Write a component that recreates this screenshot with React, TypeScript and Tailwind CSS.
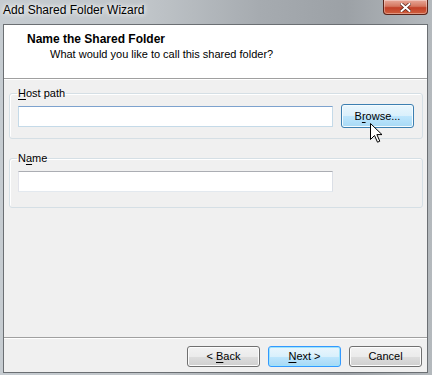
import React from 'react';

// Small helper for Windows-style access key underline
const Key: React.FC<{ children: React.ReactNode }> = ({ children }) => (
  <span className="underline underline-offset-[2px] decoration-1">{children}</span>
);

const WinButton: React.FC<{
  children: React.ReactNode;
  variant?: 'normal' | 'default' | 'hover';
  className?: string;
}> = ({ children, variant = 'normal', className = '' }) => {
  const styles = {
    normal:
      'border-[#707070] bg-[linear-gradient(#f2f2f2_0%,#ebebeb_50%,#dddddd_51%,#cfcfcf_100%)] shadow-[inset_0_0_0_1px_#fcfcfc]',
    default:
      'border-[#3399ff] bg-[linear-gradient(#eaf6fd_0%,#d9f0fc_50%,#bee6fd_51%,#a7d9f5_100%)] shadow-[inset_0_0_0_1px_#9fe3fa]',
    hover:
      'border-[#3c7fb1] bg-[linear-gradient(#eaf6fd_0%,#d9f0fc_50%,#bee6fd_51%,#a7d9f5_100%)] shadow-[inset_0_0_0_1px_#f4fbfe]',
  };
  return (
    <button
      type="button"
      className={`flex items-center justify-center w-[73px] rounded-[3px] border text-[11px] text-black ${styles[variant]} ${className}`}
    >
      <span className="whitespace-pre">{children}</span>
    </button>
  );
};

const TextBox: React.FC<{ focused?: boolean }> = ({ focused }) => (
  <div
    className={`w-[315px] h-[21px] bg-white border ${
      focused
        ? 'border-[#c5dae8] border-t-[#7da2ce]'
        : 'border-[#e3e9ef] border-t-[#abadb3] border-l-[#e2e3ea] border-r-[#dbdfe6]'
    }`}
  />
);

const Cursor: React.FC = () => (
  <svg
    className="absolute left-[370px] top-[123px]"
    width="13"
    height="20"
    viewBox="0 0 13 20"
  >
    <path
      d="M0.5 0.5 L0.5 16.5 L4.5 12.5 L7.5 19.2 L9.8 18.2 L6.9 11.6 L12 11.6 Z"
      fill="#fff"
      stroke="#000"
      strokeWidth="1"
      strokeLinejoin="miter"
    />
  </svg>
);

export default function App() {
  return (
    <div
      className="relative w-[432px] h-[375px] flex flex-col overflow-hidden bg-[linear-gradient(90deg,#c6ccd1_0%,#bfc4c8_35%,#a6abb0_60%,#9ca1a6_80%,#b4b9bd_100%)] font-['Liberation_Sans',Arial,sans-serif] text-black"
    >
      {/* Title bar */}
      <div className="h-[24px] flex items-start shrink-0">
        <div className="pl-[3px] pt-[2px] text-[12px] leading-[16px] text-black [text-shadow:0_0_6px_#ffffff,0_0_4px_#ffffff]">
          Add Shared Folder Wizard
        </div>
        <div className="ml-auto mr-[4px] w-[45px] h-[15px] rounded-b-[4px] border border-t-0 border-[#5a2318] bg-[linear-gradient(#e8a899_0%,#d47760_45%,#c24028_55%,#d0603e_100%)] shadow-[inset_0_0_0_1px_rgba(255,255,255,0.35)] flex items-center justify-center">
          <svg width="11" height="9" viewBox="0 0 11 9">
            <path
              d="M1.5 1 L9.5 8 M9.5 1 L1.5 8"
              stroke="#5a2318"
              strokeWidth="3.4"
              strokeLinecap="square"
            />
            <path
              d="M1.5 1 L9.5 8 M9.5 1 L1.5 8"
              stroke="#ffffff"
              strokeWidth="2"
              strokeLinecap="square"
            />
          </svg>
        </div>
      </div>

      {/* Client area */}
      <div className="ml-[3px] mr-[4px] mb-[2px] flex-1 flex flex-col border border-[#6b6f73] bg-[#f0f0f0]">
        {/* Wizard header */}
        <div className="bg-white h-[54px] pt-[7px] border-b border-[#a0a0a0] shrink-0">
          <div className="pl-[23px] text-[12px] leading-[15px] font-bold">Name the Shared Folder</div>
          <div className="pl-[46px] text-[11px] leading-[15px]">What would you like to call this shared folder?</div>
        </div>
        <div className="h-px bg-white shrink-0" />

        {/* Body */}
        <div className="flex-1 flex flex-col pt-[6px] pl-[5px] pr-[4px]">
          <fieldset className="border border-[#d5dfe5] rounded-[3px] pl-[8px] pr-[8px] pt-[4px] pb-[10px] shadow-[inset_1px_1px_0_#ffffff]">
            <legend className="ml-[-1px] px-[1px] text-[11px] leading-[14px]">
              <Key>H</Key>ost path
            </legend>
            <div className="flex items-center gap-[8px]">
              <TextBox focused />
              <WinButton variant="hover" className="h-[24px]">
                B<Key>r</Key>owse...
              </WinButton>
            </div>
          </fieldset>

          <fieldset className="mt-[12px] border border-[#d5dfe5] rounded-[3px] pl-[8px] pr-[8px] pt-[6px] pb-[15px] shadow-[inset_1px_1px_0_#ffffff]">
            <legend className="ml-[-1px] px-[1px] text-[11px] leading-[14px]">
              N<Key>a</Key>me
            </legend>
            <TextBox />
          </fieldset>
        </div>

        {/* Bottom buttons */}
        <div className="shrink-0 border-t border-[#a0a0a0]">
          <div className="border-t border-white flex justify-end gap-[8px] pt-[7px] pb-[5px] pr-[5px]">
            <WinButton className="h-[21px]">
              &lt; <Key>B</Key>ack
            </WinButton>
            <WinButton variant="default" className="h-[21px]">
              <Key>N</Key>ext &gt;
            </WinButton>
            <WinButton className="h-[21px]">Cancel</WinButton>
          </div>
        </div>
      </div>

      <Cursor />
    </div>
  );
}
